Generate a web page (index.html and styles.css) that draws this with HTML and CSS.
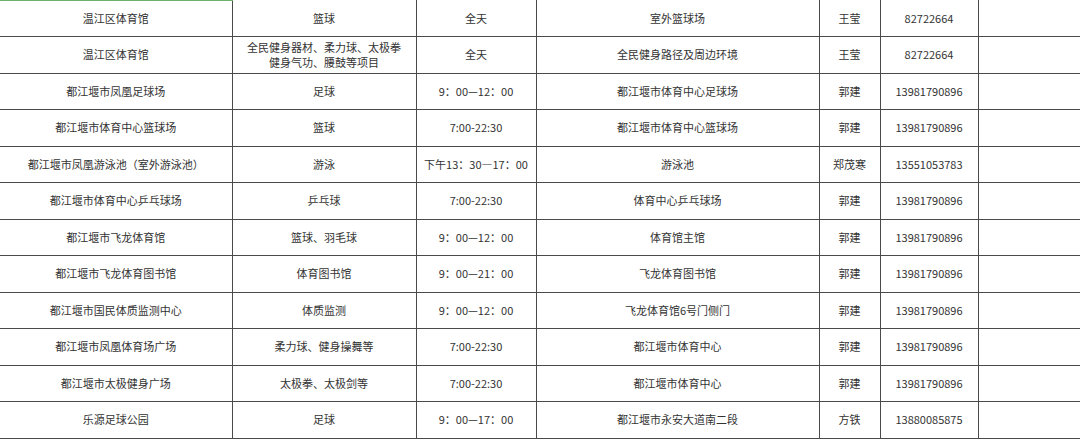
FILE: index.html
```html
<!DOCTYPE html>
<html lang="zh-CN">
<head>
<meta charset="utf-8">
<title>体育场馆开放信息</title>
<link rel="stylesheet" href="styles.css">
</head>
<body>
<table class="sheet">
  <colgroup>
    <col class="c1"><col class="c2"><col class="c3"><col class="c4"><col class="c5"><col class="c6"><col class="c7">
  </colgroup>
  <tbody>
    <tr class="first"><td class="sel">温江区体育馆</td><td>篮球</td><td>全天</td><td>室外篮球场</td><td>王莹</td><td>82722664</td><td></td></tr>
    <tr><td>温江区体育馆</td><td class="wrap">全民健身器材、柔力球、太极拳<br>健身气功、腰鼓等项目</td><td>全天</td><td>全民健身路径及周边环境</td><td>王莹</td><td>82722664</td><td></td></tr>
    <tr><td>都江堰市凤凰足球场</td><td>足球</td><td>9：00—12：00</td><td>都江堰市体育中心足球场</td><td>郭建</td><td>13981790896</td><td></td></tr>
    <tr><td>都江堰市体育中心篮球场</td><td>篮球</td><td>7:00-22:30</td><td>都江堰市体育中心篮球场</td><td>郭建</td><td>13981790896</td><td></td></tr>
    <tr><td>都江堰市凤凰游泳池（室外游泳池）</td><td>游泳</td><td>下午13：30—17：00</td><td>游泳池</td><td>郑茂寒</td><td>13551053783</td><td></td></tr>
    <tr><td>都江堰市体育中心乒乓球场</td><td>乒乓球</td><td>7:00-22:30</td><td>体育中心乒乓球场</td><td>郭建</td><td>13981790896</td><td></td></tr>
    <tr><td>都江堰市飞龙体育馆</td><td>篮球、羽毛球</td><td>9：00—12：00</td><td>体育馆主馆</td><td>郭建</td><td>13981790896</td><td></td></tr>
    <tr><td>都江堰市飞龙体育图书馆</td><td>体育图书馆</td><td>9：00—21：00</td><td>飞龙体育图书馆</td><td>郭建</td><td>13981790896</td><td></td></tr>
    <tr><td>都江堰市国民体质监测中心</td><td>体质监测</td><td>9：00—12：00</td><td>飞龙体育馆6号门侧门</td><td>郭建</td><td>13981790896</td><td></td></tr>
    <tr><td>都江堰市凤凰体育场广场</td><td>柔力球、健身操舞等</td><td>7:00-22:30</td><td>都江堰市体育中心</td><td>郭建</td><td>13981790896</td><td></td></tr>
    <tr><td>都江堰市太极健身广场</td><td>太极拳、太极剑等</td><td>7:00-22:30</td><td>都江堰市体育中心</td><td>郭建</td><td>13981790896</td><td></td></tr>
    <tr><td>乐源足球公园</td><td>足球</td><td>9：00—17：00</td><td>都江堰市永安大道南二段</td><td>方铁</td><td>13880085875</td><td></td></tr>
  </tbody>
</table>
</body>
</html>
```

FILE: styles.css
```css
html, body {
  margin: 0;
  padding: 0;
  background: #ffffff;
}

body {
  width: 1080px;
  height: 439px;
  overflow: hidden;
  font-family: "Noto Sans CJK SC", "Noto Sans", sans-serif;
  font-size: 11px;
  color: #333333;
}

.sheet {
  border-collapse: collapse;
  table-layout: fixed;
  width: 1080px;
  margin-top: -1px;
}

.c1 { width: 232px; }
.c2 { width: 184px; }
.c3 { width: 120px; }
.c4 { width: 283px; }
.c5 { width: 61px; }
.c6 { width: 98px; }
.c7 { width: 102px; }

.sheet tr {
  height: 36.5px;
}

.sheet td {
  border: 1px solid #4a4a4a;
  padding: 0;
  text-align: center;
  vertical-align: middle;
  white-space: nowrap;
  line-height: 13px;
}

.sheet td:first-child {
  border-left: none;
}

.sheet td:last-child {
  border-right: 1px solid #8a8a8a;
}

.sheet tr.first td {
  border-top: 1px solid transparent;
}

.sheet tr.first td.sel {
  border-top: 2px solid #6cb26c;
}

.sheet td.wrap {
  line-height: 15px;
}
```
